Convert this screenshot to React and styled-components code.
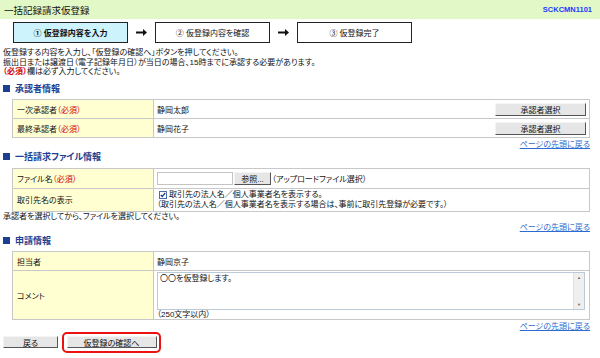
import React from "react";
import styled, { createGlobalStyle } from "styled-components";

const GlobalStyle = createGlobalStyle`
  html, body {
    margin: 0;
    padding: 0;
    background: #fff;
  }
  body {
    font-family: "Liberation Sans", "Noto Sans CJK JP", sans-serif;
    font-size: 8px;
    color: #222;
    font-feature-settings: "palt";
  }
`;

const Page = styled.div`
  width: 600px;
  height: 358px;
  overflow: hidden;
`;

const Header = styled.div`
  height: 19px;
  background: #e2f8c6;
  display: flex;
  align-items: center;
  justify-content: space-between;
  padding: 0 8px 0 4px;
`;

const Title = styled.h1`
  margin: 0;
  font-size: 9.5px;
  font-weight: normal;
  color: #111;
`;

const ScreenId = styled.span`
  font-size: 7.5px;
  font-weight: bold;
  color: #1a3cff;
`;

const Steps = styled.div`
  display: flex;
  align-items: center;
  margin-top: 3px;
  padding-left: 13px;
`;

const StepBox = styled.div`
  box-sizing: border-box;
  width: 115px;
  height: 21px;
  border: 1.5px solid #222;
  background: ${(p) => (p.$active ? "#cdf3fd" : "#fff")};
  display: flex;
  align-items: center;
  justify-content: center;
  font-size: 8px;
  font-weight: ${(p) => (p.$active ? "bold" : "normal")};
  color: #111;
`;

const StepArrow = styled.div`
  width: 27px;
  display: flex;
  justify-content: center;
`;

const Intro = styled.div`
  margin: 5px 0 6px 3px;
  line-height: 9.5px;
  color: #111;
`;

const Required = styled.span`
  color: #d40000;
  font-weight: ${(p) => (p.$bold ? "bold" : "normal")};
`;

const SectionTitle = styled.h2`
  margin: 1.5px 0 0 3px;
  height: 11px;
  display: flex;
  align-items: center;
  gap: 5px;
  font-size: 9px;
  font-weight: bold;
  color: #1d3f91;

  &::before {
    content: "";
    width: 7px;
    height: 7px;
    background: #1d3f91;
  }
`;

const Table = styled.div`
  margin: 5.5px 0 0 12px;
  width: 578px;
  box-sizing: border-box;
  display: grid;
  grid-template-columns: 140px 1fr;
  gap: 1px;
  padding: 1px;
  background: #c8c8c8;
`;

const LabelCell = styled.div`
  height: ${(p) => p.$h}px;
  padding-left: 4px;
  background: #ffffd2;
  display: flex;
  align-items: center;
  color: #111;
`;

const ValueCell = styled.div`
  height: ${(p) => p.$h}px;
  box-sizing: border-box;
  padding: ${(p) => (p.$top ? "1px 3px 0" : "0 3px")};
  background: #fff;
  display: flex;
  flex-direction: column;
  justify-content: ${(p) => (p.$top ? "flex-start" : "center")};
  color: #111;
`;

const CellRow = styled.div`
  display: flex;
  align-items: center;
  justify-content: space-between;
`;

const GrayButton = styled.button`
  box-sizing: border-box;
  width: ${(p) => p.$w}px;
  height: ${(p) => p.$hgt || 13}px;
  padding: 0;
  background: #e6e6e6;
  border: 1px solid;
  border-color: #f4f4f4 #555 #555 #f4f4f4;
  font-family: inherit;
  font-size: 8px;
  color: #111;
  font-feature-settings: "palt";
`;

const TopLink = styled.a`
  display: block;
  margin: 1.5px 0 0;
  width: 590px;
  text-align: right;
  line-height: 10px;
  color: #2d6bd0;
  text-decoration: underline;
`;

const FileRow = styled.div`
  display: flex;
  align-items: center;
  gap: 1px;
`;

const FileBox = styled.div`
  box-sizing: border-box;
  width: 76px;
  height: 13px;
  border: 1px solid #c4c4c4;
  background: #fff;
`;

const CheckLine = styled.div`
  display: flex;
  align-items: center;
  gap: 2px;
  line-height: 10px;
  padding-left: 2px;
`;

const CheckBox = styled.span`
  box-sizing: border-box;
  width: 8px;
  height: 8px;
  border: 1px solid #4a6ea8;
  background: #fff;
  display: flex;
  align-items: center;
  justify-content: center;
`;

const SubLine = styled.div`
  line-height: 10px;
`;

const Note = styled.div`
  margin: 0 0 0 3px;
  line-height: 10px;
  color: #111;
`;

const TextBox = styled.div`
  box-sizing: border-box;
  display: flex;
  width: 428px;
  height: 38px;
  border: 1px solid #bcc9d6;
  background: #fff;
`;

const TextContent = styled.div`
  flex: 1;
  padding: 1px 2px;
  line-height: 10px;
`;

const ScrollTrack = styled.div`
  width: 10px;
  background: #efefef;
  border-left: 1px solid #e0e0e0;
  display: flex;
  flex-direction: column;
  justify-content: space-between;
  align-items: center;
  padding: 2px 0;
  font-size: 4px;
  color: #666;
`;

const Limit = styled.div`
  line-height: 9px;
`;

const Footer = styled.div`
  display: flex;
  align-items: center;
  gap: 4px;
  margin: 0 0 0 3px;
`;

const Highlight = styled.span`
  display: flex;
  padding: 2.5px;
  border: 2.5px solid #ee1111;
  border-radius: 5px;
`;

function Arrow() {
  return (
    <svg width="11" height="7" viewBox="0 0 11 7">
      <path d="M0 2.5h7V0l4 3.5-4 3.5V4.5H0z" fill="#111" />
    </svg>
  );
}

function Check() {
  return (
    <svg width="6" height="6" viewBox="0 0 6 6">
      <path d="M0.8 3l1.4 1.5L5.2 1" stroke="#1a3f8f" strokeWidth="1.2" fill="none" />
    </svg>
  );
}

export default function App() {
  return (
    <Page>
      <GlobalStyle />
      <Header>
        <Title>一括記録請求仮登録</Title>
        <ScreenId>SCKCMN1101</ScreenId>
      </Header>

      <Steps>
        <StepBox $active>① 仮登録内容を入力</StepBox>
        <StepArrow>
          <Arrow />
        </StepArrow>
        <StepBox>② 仮登録内容を確認</StepBox>
        <StepArrow>
          <Arrow />
        </StepArrow>
        <StepBox>③ 仮登録完了</StepBox>
      </Steps>

      <Intro>
        仮登録する内容を入力し、「仮登録の確認へ」ボタンを押してください。
        <br />
        振出日または譲渡日（電子記録年月日）が当日の場合、15時までに承認する必要があります。
        <br />
        <Required $bold>（必須）</Required>欄は必ず入力してください。
      </Intro>

      <SectionTitle>承認者情報</SectionTitle>
      <Table>
        <LabelCell $h={18}>
          一次承認者<Required>（必須）</Required>
        </LabelCell>
        <ValueCell $h={18}>
          <CellRow>
            <span>静岡太郎</span>
            <GrayButton $w={91}>承認者選択</GrayButton>
          </CellRow>
        </ValueCell>
        <LabelCell $h={18}>
          最終承認者<Required>（必須）</Required>
        </LabelCell>
        <ValueCell $h={18}>
          <CellRow>
            <span>静岡花子</span>
            <GrayButton $w={91}>承認者選択</GrayButton>
          </CellRow>
        </ValueCell>
      </Table>
      <TopLink href="#top">ページの先頭に戻る</TopLink>

      <SectionTitle>一括請求ファイル情報</SectionTitle>
      <Table>
        <LabelCell $h={19}>
          ファイル名<Required>（必須）</Required>
        </LabelCell>
        <ValueCell $h={19}>
          <FileRow>
            <FileBox />
            <GrayButton $w={37}>参照...</GrayButton>
            <span>（アップロードファイル選択）</span>
          </FileRow>
        </ValueCell>
        <LabelCell $h={22}>取引先名の表示</LabelCell>
        <ValueCell $h={22}>
          <CheckLine>
            <CheckBox>
              <Check />
            </CheckBox>
            取引先の法人名／個人事業者名を表示する。
          </CheckLine>
          <SubLine>
            （取引先の法人名／個人事業者名を表示する場合は、事前に取引先登録が必要です。）
          </SubLine>
        </ValueCell>
      </Table>
      <Note>承認者を選択してから、ファイルを選択してください。</Note>
      <TopLink href="#top">ページの先頭に戻る</TopLink>

      <SectionTitle>申請情報</SectionTitle>
      <Table>
        <LabelCell $h={18}>担当者</LabelCell>
        <ValueCell $h={18}>静岡京子</ValueCell>
        <LabelCell $h={48}>コメント</LabelCell>
        <ValueCell $h={48} $top>
          <TextBox>
            <TextContent>〇〇を仮登録します。</TextContent>
            <ScrollTrack>
              <span>▲</span>
              <span>▼</span>
            </ScrollTrack>
          </TextBox>
          <Limit>（250文字以内）</Limit>
        </ValueCell>
      </Table>
      <TopLink href="#top">ページの先頭に戻る</TopLink>

      <Footer>
        <GrayButton $w={55} $hgt={12}>
          戻る
        </GrayButton>
        <Highlight>
          <GrayButton $w={90} $hgt={12}>
            仮登録の確認へ
          </GrayButton>
        </Highlight>
      </Footer>
    </Page>
  );
}
